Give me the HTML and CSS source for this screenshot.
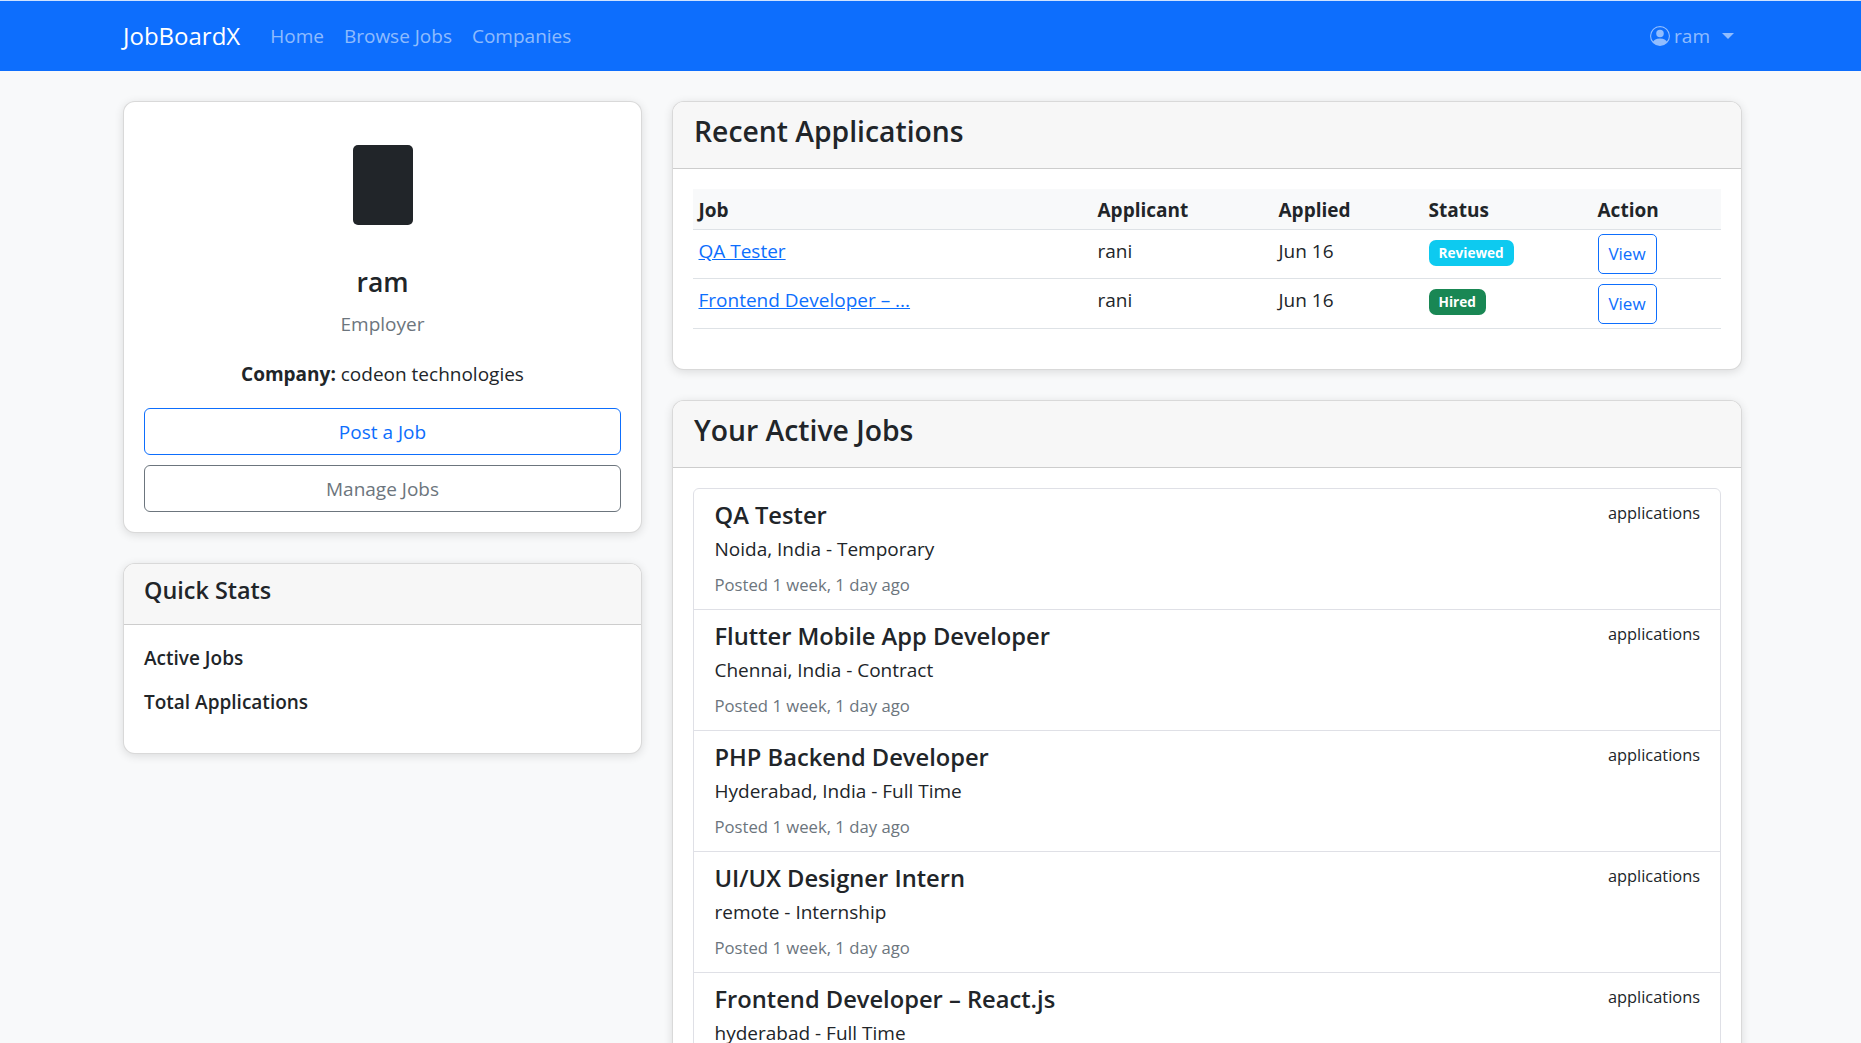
FILE: index.html
```html
<!DOCTYPE html>
<html lang="en">
<head>
  <meta charset="UTF-8">
  <meta name="viewport" content="width=device-width, initial-scale=1.0">
  <title>JobBoardX</title>
  <link rel="stylesheet" href="styles.css">
</head>
<body>
  <nav class="navbar">
    <div class="nav-left">
      <a class="brand" href="#">JobBoardX</a>
      <a class="nav-link" href="#">Home</a>
      <a class="nav-link" href="#">Browse Jobs</a>
      <a class="nav-link" href="#">Companies</a>
    </div>
    <a class="nav-link user-menu" href="#">
      <svg class="user-icon" viewBox="0 0 16 16" fill="currentColor">
        <path d="M11 6a3 3 0 1 1-6 0 3 3 0 0 1 6 0z"/>
        <path fill-rule="evenodd" d="M0 8a8 8 0 1 1 16 0A8 8 0 0 1 0 8zm8-7a7 7 0 0 0-5.468 11.37C3.242 11.226 4.805 10 8 10s4.757 1.225 5.468 2.37A7 7 0 0 0 8 1z"/>
      </svg>
      <span>ram</span>
      <span class="caret"></span>
    </a>
  </nav>

  <main class="page">
    <aside class="side-col">
      <section class="card profile-card">
        <div class="avatar"></div>
        <h2 class="profile-name">ram</h2>
        <p class="profile-role">Employer</p>
        <p class="profile-company"><strong>Company:</strong> codeon technologies</p>
        <a class="btn btn-primary-outline btn-block" href="#">Post a Job</a>
        <a class="btn btn-secondary-outline btn-block" href="#">Manage Jobs</a>
      </section>

      <section class="card">
        <div class="card-header">
          <h3 class="stats-title">Quick Stats</h3>
        </div>
        <div class="stats-body">
          <p><strong>Active Jobs</strong></p>
          <p><strong>Total Applications</strong></p>
        </div>
      </section>
    </aside>

    <div class="main-col">
      <section class="card">
        <div class="card-header">
          <h2 class="section-title">Recent Applications</h2>
        </div>
        <div class="apps-body">
          <table class="apps-table">
            <thead>
              <tr>
                <th class="col-job">Job</th>
                <th class="col-applicant">Applicant</th>
                <th class="col-applied">Applied</th>
                <th class="col-status">Status</th>
                <th>Action</th>
              </tr>
            </thead>
            <tbody>
              <tr>
                <td><a href="#">QA Tester</a></td>
                <td>rani</td>
                <td>Jun 16</td>
                <td><span class="badge badge-info">Reviewed</span></td>
                <td><a class="btn btn-primary-outline btn-sm" href="#">View</a></td>
              </tr>
              <tr class="row-tall">
                <td><a href="#">Frontend Developer – ...</a></td>
                <td>rani</td>
                <td>Jun 16</td>
                <td><span class="badge badge-success">Hired</span></td>
                <td><a class="btn btn-primary-outline btn-sm" href="#">View</a></td>
              </tr>
            </tbody>
          </table>
        </div>
      </section>

      <section class="card">
        <div class="card-header">
          <h2 class="section-title">Your Active Jobs</h2>
        </div>
        <div class="jobs-body">
          <div class="job-list">
            <div class="job-item">
              <div class="job-top"><h3>QA Tester</h3><small>applications</small></div>
              <p class="job-place">Noida, India - Temporary</p>
              <small class="job-posted">Posted 1 week, 1 day ago</small>
            </div>
            <div class="job-item">
              <div class="job-top"><h3>Flutter Mobile App Developer</h3><small>applications</small></div>
              <p class="job-place">Chennai, India - Contract</p>
              <small class="job-posted">Posted 1 week, 1 day ago</small>
            </div>
            <div class="job-item">
              <div class="job-top"><h3>PHP Backend Developer</h3><small>applications</small></div>
              <p class="job-place">Hyderabad, India - Full Time</p>
              <small class="job-posted">Posted 1 week, 1 day ago</small>
            </div>
            <div class="job-item">
              <div class="job-top"><h3>UI/UX Designer Intern</h3><small>applications</small></div>
              <p class="job-place">remote - Internship</p>
              <small class="job-posted">Posted 1 week, 1 day ago</small>
            </div>
            <div class="job-item">
              <div class="job-top"><h3>Frontend Developer – React.js</h3><small>applications</small></div>
              <p class="job-place">hyderabad - Full Time</p>
              <small class="job-posted">Posted 1 week, 1 day ago</small>
            </div>
          </div>
        </div>
      </section>
    </div>
  </main>
</body>
</html>
```

FILE: styles.css
```css
* {
  box-sizing: border-box;
}

html, body {
  height: 100%;
}

body {
  margin: 0;
  background: #f8f9fa;
  color: #212529;
  font-family: 'Open Sans', 'Noto Sans', sans-serif;
  font-size: 19px;
  line-height: 30px;
  overflow: hidden;
}

h2, h3 {
  margin: 0;
  font-weight: 600;
}

p {
  margin: 0;
}

a {
  color: #0d6efd;
}

strong, th {
  font-weight: 700;
}

.navbar {
  height: 71px;
  border-top: 1px solid #cfe2ff;
  background: #0d6efd;
  padding: 0 127px 0 123px;
  display: flex;
  justify-content: space-between;
  align-items: center;
}

.nav-left {
  display: flex;
  align-items: center;
}

.brand {
  color: #fff;
  font-size: 24px;
  text-decoration: none;
  margin-right: 30px;
}

.nav-link {
  color: rgba(255, 255, 255, 0.55);
  text-decoration: none;
  margin-right: 20px;
}

.user-menu {
  display: flex;
  align-items: center;
  margin-right: 0;
}

.user-icon {
  width: 20px;
  height: 20px;
  margin-right: 4px;
}

.caret {
  width: 0;
  height: 0;
  margin-left: 12px;
  border-top: 6px solid;
  border-left: 6px solid transparent;
  border-right: 6px solid transparent;
}

.page {
  display: grid;
  grid-template-columns: 519px 1070px;
  column-gap: 30px;
  padding: 30px 0 0 123px;
}

.side-col,
.main-col {
  display: flex;
  flex-direction: column;
  gap: 30px;
}

.card {
  background: #fff;
  border: 1px solid rgba(0, 0, 0, 0.15);
  border-radius: 12px;
  box-shadow: 0 2px 10px rgba(0, 0, 0, 0.12);
  overflow: hidden;
}

.card-header {
  background: #f7f7f7;
  border-bottom: 1px solid rgba(0, 0, 0, 0.17);
  padding: 0 20px;
}

.profile-card {
  padding: 43px 20px 20px;
  text-align: center;
}

.avatar {
  width: 60px;
  height: 80px;
  margin: 0 auto;
  background: #212529;
  border-radius: 5px;
}

.profile-name {
  margin-top: 37px;
  font-size: 26.5px;
  line-height: 40px;
}

.profile-role {
  margin-top: 7px;
  color: #6c757d;
}

.profile-company {
  margin: 20px 0 19px;
}

.btn {
  display: block;
  text-align: center;
  text-decoration: none;
  background: #fff;
  border: 1px solid;
  border-radius: 6px;
}

.btn-block {
  height: 47px;
  line-height: 47px;
}

.btn-block + .btn-block {
  margin-top: 10px;
}

.btn-primary-outline {
  color: #0d6efd;
  border-color: #0d6efd;
}

.btn-secondary-outline {
  color: #6c757d;
  border-color: #6c757d;
}

.btn-sm {
  display: inline-block;
  width: 59px;
  height: 40px;
  margin-top: -2px;
  line-height: 38px;
  font-size: 17px;
  border-radius: 5px;
  vertical-align: top;
}

.row-tall .btn-sm {
  margin-top: -1px;
}

.stats-title {
  font-size: 23.4px;
  height: 60px;
  line-height: 52px;
}

.stats-body {
  padding: 18px 20px 22px;
}

.stats-body p {
  height: 44px;
}

.stats-body strong {
  font-weight: 600;
}

.section-title {
  font-size: 28.3px;
  height: 66px;
  line-height: 58px;
  margin-left: 1px;
}

.apps-body {
  padding: 20px 20px 40px;
}

.apps-table {
  width: 100%;
  border-collapse: collapse;
  table-layout: fixed;
}

.apps-table th {
  background: #f8f9fa;
  text-align: left;
  height: 40px;
  padding: 2px 5.5px 0;
  border-bottom: 1px solid #dee2e6;
}

.apps-table td {
  height: 49px;
  padding: 6px 5.5px 0;
  border-bottom: 1px solid #dee2e6;
  vertical-align: top;
}

.apps-table .row-tall td {
  height: 50px;
}

.col-job { width: 399px; }
.col-applicant { width: 181px; }
.col-applied { width: 150px; }
.col-status { width: 169px; }

.badge {
  display: inline-block;
  height: 26px;
  padding: 0 10px;
  color: #fff;
  font-size: 13.6px;
  font-weight: 700;
  line-height: 26px;
  border-radius: 7px;
  vertical-align: top;
  margin-top: 4px;
}

.badge-info { background: #0dcaf0; }
.badge-success { background: #198754; }

.jobs-body {
  padding: 20px;
}

.job-list {
  border: 1px solid #dfe0e6;
  border-radius: 6px;
}

.job-item {
  height: 121px;
  padding: 8px 20px 8px 20.5px;
  border-bottom: 1px solid #dfe0e6;
}

.job-top {
  display: flex;
  justify-content: space-between;
}

.job-top h3 {
  font-size: 23.7px;
  line-height: 30px;
  margin-top: 3px;
}

.job-top small {
  font-size: 16.4px;
  margin-top: 1px;
}

.job-place {
  line-height: 30px;
  margin-top: 4px;
}

.job-posted {
  display: block;
  margin-top: 6px;
  color: #6c757d;
  font-size: 16.7px;
}
```
